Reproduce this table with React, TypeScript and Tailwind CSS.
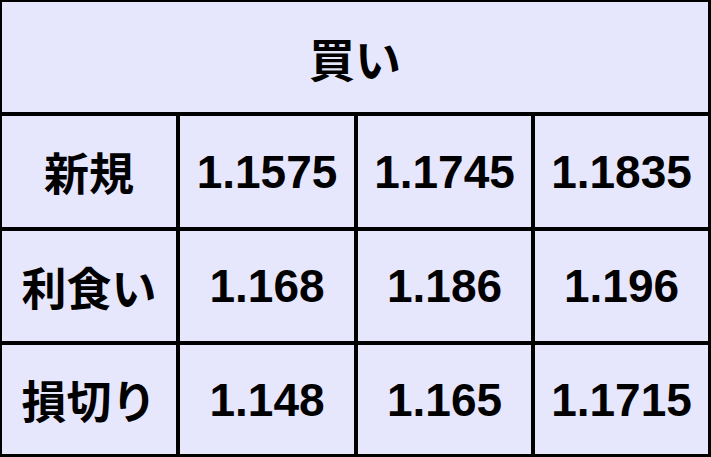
import { Fragment } from "react";

const rows: { label: string; values: string[] }[] = [
  { label: "新規", values: ["1.1575", "1.1745", "1.1835"] },
  { label: "利食い", values: ["1.168", "1.186", "1.196"] },
  { label: "損切り", values: ["1.148", "1.165", "1.1715"] },
];

const jp = "[font-family:'Noto_Sans_CJK_JP','Noto_Sans',sans-serif]";

export default function App() {
  return (
    <div className="w-[711px] h-[457px] bg-black pl-[2px] pt-[2px] pr-[3px] pb-[3px]">
      <div className="grid h-full grid-cols-[174px_174px_173px_173px] grid-rows-[110px_111px_110px_109px] gap-[4px] bg-black text-black">
        {/* header */}
        <div
          className={`col-span-4 flex items-center justify-center bg-[#e6e6fc] text-[46px] font-bold leading-none ${jp}`}
        >
          買い
        </div>

        {rows.map((row) => (
          <Fragment key={row.label}>
            <div
              className={`flex items-center justify-center bg-[#e6e6fc] text-[45px] font-bold leading-none ${jp}`}
            >
              {row.label}
            </div>
            {row.values.map((v, i) => (
              <div
                key={i}
                className="flex items-center justify-center bg-[#e6e6fc] text-[46px] font-bold leading-none [font-family:'Liberation_Sans',Arial,sans-serif]"
              >
                {v}
              </div>
            ))}
          </Fragment>
        ))}
      </div>
    </div>
  );
}
